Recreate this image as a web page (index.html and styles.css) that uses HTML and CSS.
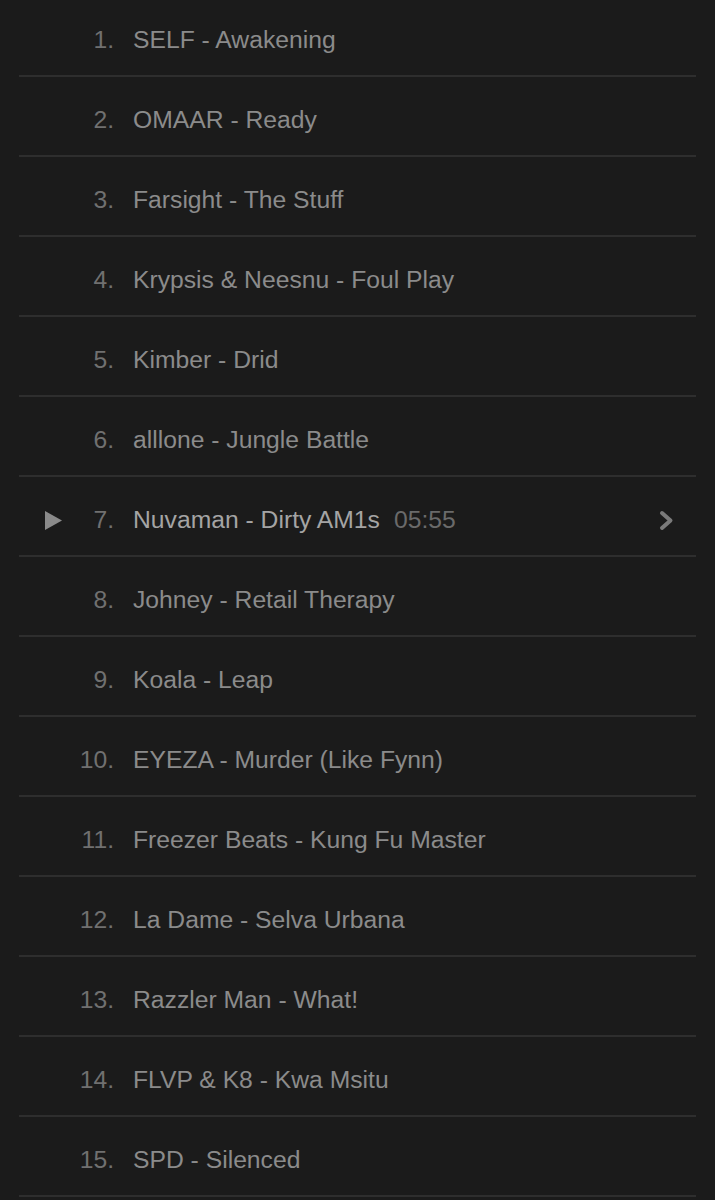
FILE: index.html
```html
<!DOCTYPE html>
<html>
<head>
<meta charset="utf-8">
<link rel="stylesheet" href="styles.css">
</head>
<body>
<ol class="tracks">
  <li class="row"><span class="lead"><span class="num">1.</span></span><span class="title">SELF - Awakening</span></li>
  <li class="row"><span class="lead"><span class="num">2.</span></span><span class="title">OMAAR - Ready</span></li>
  <li class="row"><span class="lead"><span class="num">3.</span></span><span class="title">Farsight - The Stuff</span></li>
  <li class="row"><span class="lead"><span class="num">4.</span></span><span class="title">Krypsis &amp; Neesnu - Foul Play</span></li>
  <li class="row"><span class="lead"><span class="num">5.</span></span><span class="title">Kimber - Drid</span></li>
  <li class="row"><span class="lead"><span class="num">6.</span></span><span class="title">alllone - Jungle Battle</span></li>
  <li class="row active"><span class="lead"><svg class="play" width="17" height="19" viewBox="0 0 17 19"><polygon points="0,0 17,9.5 0,19" fill="#8a8a8a"/></svg><span class="num">7.</span></span><span class="title">Nuvaman - Dirty AM1s</span><span class="dur">05:55</span><svg class="chev" width="15" height="21" viewBox="0 0 15 21"><path d="M3 3 L11.5 10.5 L3 18" fill="none" stroke="#7a7a7a" stroke-width="4" stroke-linecap="round" stroke-linejoin="round"/></svg></li>
  <li class="row"><span class="lead"><span class="num">8.</span></span><span class="title">Johney - Retail Therapy</span></li>
  <li class="row"><span class="lead"><span class="num">9.</span></span><span class="title">Koala - Leap</span></li>
  <li class="row"><span class="lead"><span class="num">10.</span></span><span class="title">EYEZA - Murder (Like Fynn)</span></li>
  <li class="row"><span class="lead"><span class="num">11.</span></span><span class="title">Freezer Beats - Kung Fu Master</span></li>
  <li class="row"><span class="lead"><span class="num">12.</span></span><span class="title">La Dame - Selva Urbana</span></li>
  <li class="row"><span class="lead"><span class="num">13.</span></span><span class="title">Razzler Man - What!</span></li>
  <li class="row"><span class="lead"><span class="num">14.</span></span><span class="title">FLVP &amp; K8 - Kwa Msitu</span></li>
  <li class="row"><span class="lead"><span class="num">15.</span></span><span class="title">SPD - Silenced</span></li>
</ol>
</body>
</html>
```
FILE: styles.css
```css
html, body {
  margin: 0;
  padding: 0;
  background: #1b1b1b;
  height: 1200px;
  overflow: hidden;
}
body {
  font-family: "Liberation Sans", Arial, sans-serif;
  font-size: 24.7px;
  color: #8b8b8b;
}
.tracks {
  list-style: none;
  margin: -3px 19px 0 19px;
  padding: 0;
}
.row {
  display: flex;
  align-items: center;
  height: 70px;
  padding-top: 8px;
  border-bottom: 2px solid #2e2e2e;
}
.lead {
  display: flex;
  align-items: center;
  width: 95px;
  flex-shrink: 0;
  padding-left: 26px;
  box-sizing: border-box;
}
.play {
  display: block;
  flex-shrink: 0;
}
.num {
  flex: 1;
  text-align: right;
  color: #707070;
}
.title {
  margin-left: 19px;
  white-space: nowrap;
}
.active .title {
  color: #a4a4a4;
}
.dur {
  margin-left: 14px;
  color: #6a6a6a;
}
.chev {
  display: block;
  margin-left: auto;
  margin-right: 22px;
}
```
